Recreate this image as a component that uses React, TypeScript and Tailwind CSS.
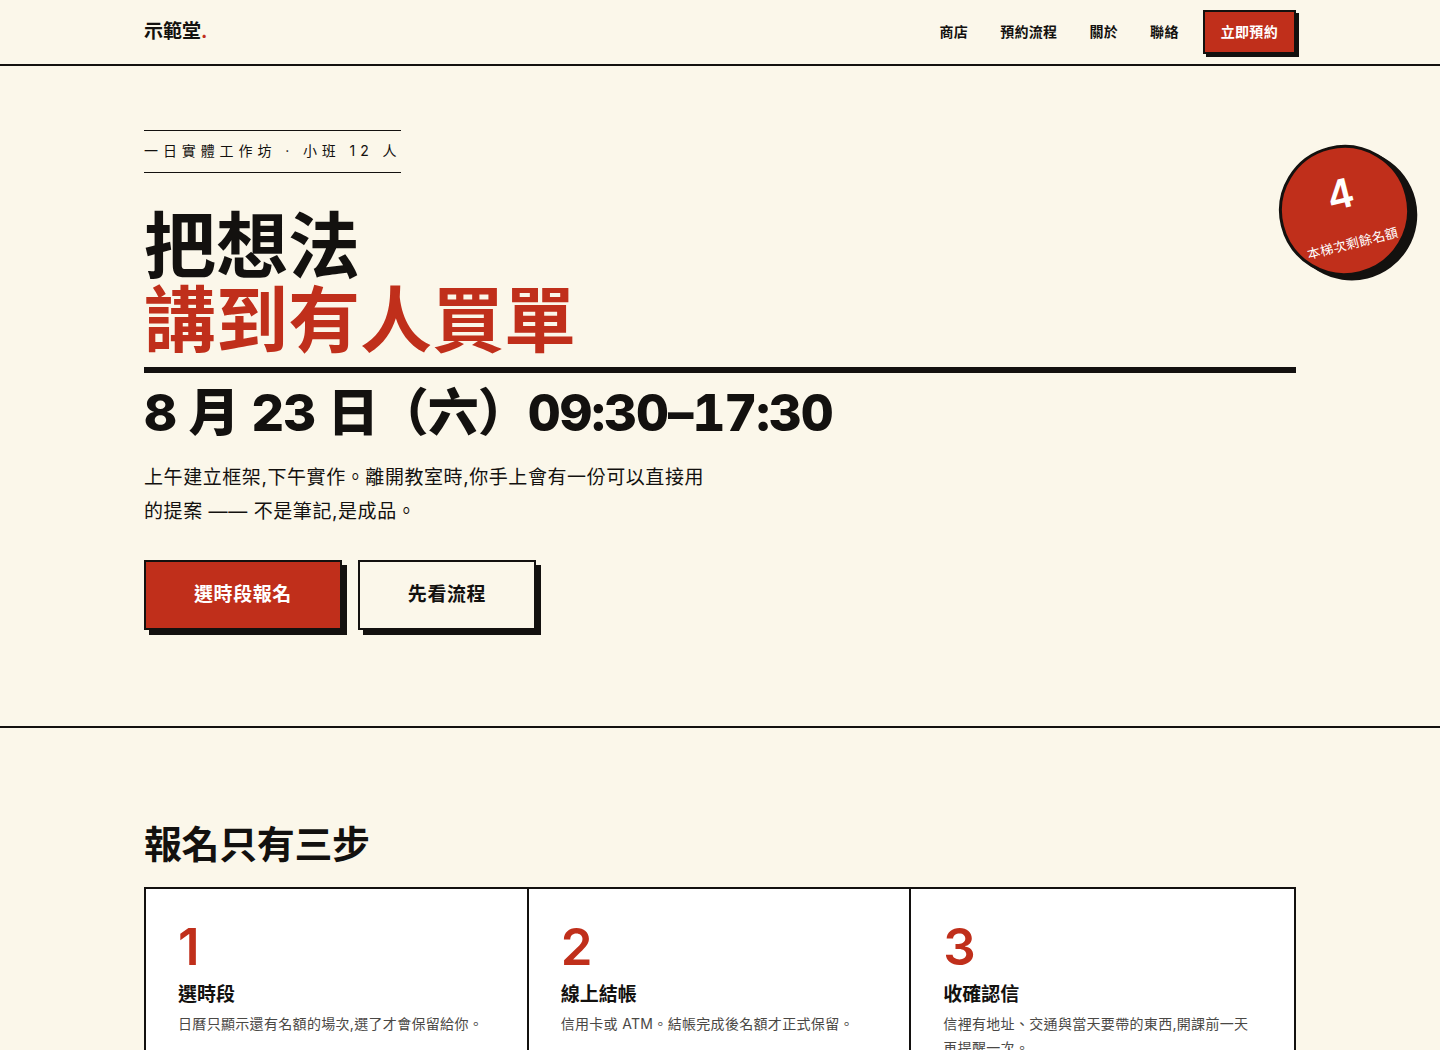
import type { ReactNode } from 'react';
import clsx from 'clsx';

const NAV_LINKS = [
  { label: '商店', href: '#shop' },
  { label: '預約流程', href: '#steps' },
  { label: '關於', href: '#about' },
  { label: '聯絡', href: '#contact' },
];

const STEPS = [
  { no: 1, title: '選時段', body: '日曆只顯示還有名額的場次,選了才會保留給你。' },
  { no: 2, title: '線上結帳', body: '信用卡或 ATM。結帳完成後名額才正式保留。' },
  { no: 3, title: '收確認信', body: '信裡有地址、交通與當天要帶的東西,開課前一天再提醒一次。' },
];

export default function App() {
  return (
    <div
      lang="zh-Hant"
      className="min-h-screen overflow-x-hidden bg-[#fbf7ea] font-['Inter','Noto_Sans_CJK_TC',sans-serif] tracking-[0.02em] text-[#13110f]"
    >
      <Header />
      <main>
        <Hero />
        <Steps />
      </main>
    </div>
  );
}

function Header() {
  return (
    <header className="border-b-2 border-[#13110f]">
      <Container className="flex h-16 items-center justify-between">
        <a href="#top" className="text-[19px] font-bold tracking-normal">
          示範堂<span className="text-[#c02f1b]">.</span>
        </a>
        <nav className="flex items-center gap-8 text-sm font-bold">
          {NAV_LINKS.map((link) => (
            <a key={link.href} href={link.href}>
              {link.label}
            </a>
          ))}
          <button className="-ml-2 h-11 border-2 border-[#13110f] bg-[#c02f1b] px-4 text-white shadow-[3px_3px_0_#13110f]">
            立即預約
          </button>
        </nav>
      </Container>
    </header>
  );
}

function Hero() {
  return (
    <section id="top" className="relative border-b-2 border-[#13110f] pt-16 pb-24">
      <SeatsBadge count={4} />
      <Container>
        <p className="inline-block border-y border-[#13110f] pt-[7px] pb-[9px] text-sm leading-[25px] tracking-[0.35em]">
          一日實體工作坊 · 小班 12 人
        </p>
        <h1 className="mt-9 border-b-6 border-[#13110f] pb-[10px] text-[72px] leading-[74px] font-bold tracking-normal">
          把想法
          <br />
          <span className="text-[#c02f1b]">講到有人買單</span>
        </h1>
        <p className="mt-2 text-[51px] leading-[64px] font-extrabold tracking-[-0.02em] tabular-nums">
          8 月 23 日（六）09:30–17:30
        </p>
        <p className="mt-4 max-w-[570px] text-[19px] leading-[34px] tracking-[0.03em]">
          上午建立框架,下午實作。離開教室時,你手上會有一份可以直接用的提案 —— 不是筆記,是成品。
        </p>
        <div className="mt-[31px] flex gap-4">
          <ActionButton primary>選時段報名</ActionButton>
          <ActionButton>先看流程</ActionButton>
        </div>
      </Container>
    </section>
  );
}

function SeatsBadge({ count }: { count: number }) {
  return (
    <div className="absolute top-[79px] right-[30px] flex size-[131px] -rotate-14 flex-col items-center justify-center rounded-full border-3 border-[#13110f] bg-[#c02f1b] text-white shadow-[6px_6px_0_#13110f]">
      <span className="text-[40px] leading-[66px] font-semibold">{count}</span>
      <span className="text-[13px] leading-[34px] whitespace-nowrap">本梯次剩餘名額</span>
    </div>
  );
}

function Steps() {
  return (
    <section id="steps" className="py-24">
      <Container>
        <h2 className="text-[38px] leading-[40px] font-bold tracking-[-0.01em]">報名只有三步</h2>
        <ol className="mt-[23px] grid grid-cols-3 divide-x-2 divide-[#13110f] border-2 border-[#13110f] bg-white">
          {STEPS.map((step) => (
            <li key={step.no} className="p-8">
              <p className="text-[51px] leading-[52px] font-semibold tracking-normal text-[#c02f1b]">{step.no}</p>
              <h3 className="mt-2 text-[19px] leading-[28px] font-bold tracking-normal">{step.title}</h3>
              <p className="mt-[3px] text-sm leading-6 text-[#4a4845]">{step.body}</p>
            </li>
          ))}
        </ol>
      </Container>
    </section>
  );
}

function Container({ className, children }: { className?: string; children: ReactNode }) {
  return <div className={clsx('mx-auto w-full max-w-6xl', className)}>{children}</div>;
}

function ActionButton({ primary, children }: { primary?: boolean; children: ReactNode }) {
  return (
    <button
      className={clsx(
        'h-[70px] border-2 border-[#13110f] px-12 text-[19px] font-bold tracking-[0.03em] shadow-[5px_5px_0_#13110f]',
        primary ? 'bg-[#c02f1b] text-white' : 'bg-[#fbf7ea]',
      )}
    >
      {children}
    </button>
  );
}
